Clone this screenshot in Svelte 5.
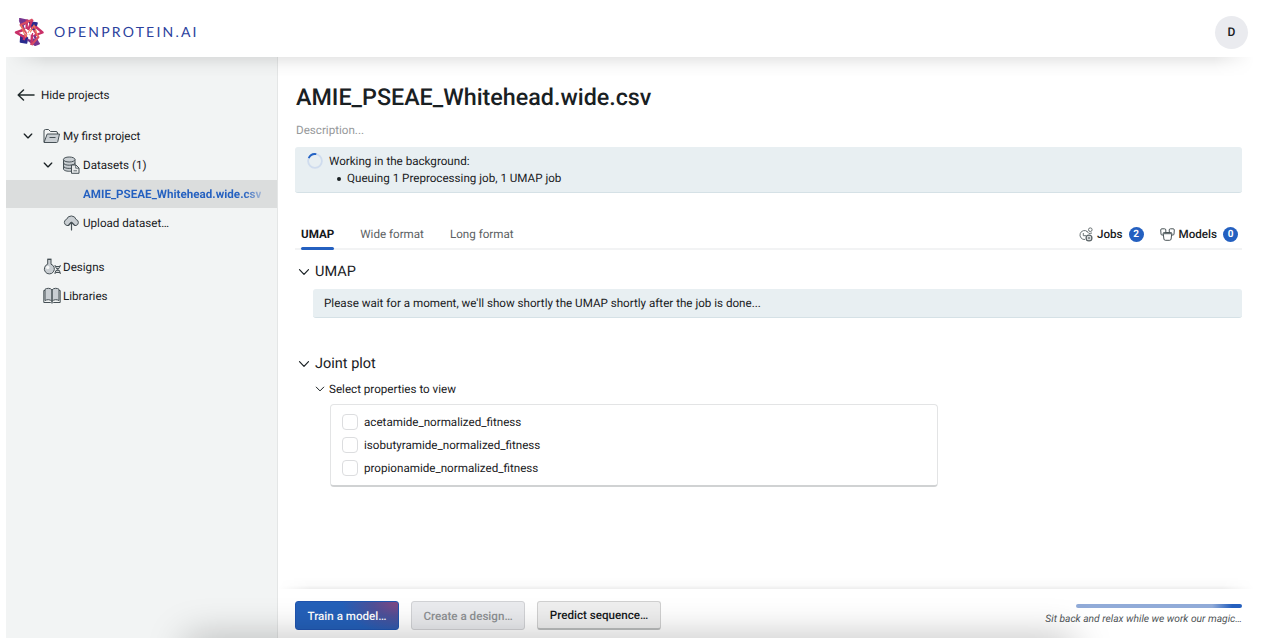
<script>
  const tabs = ['UMAP', 'Wide format', 'Long format'];
  const properties = [
    'acetamide_normalized_fitness',
    'isobutyramide_normalized_fitness',
    'propionamide_normalized_fitness'
  ];
</script>

{#snippet chevron(size, width)}
  <svg class="chevron" width={size} height={size} viewBox="0 0 12 12" fill="none" stroke="currentColor" stroke-width={width} stroke-linecap="round" stroke-linejoin="round"><path d="M1.5 3.700 6 8.300l4.500-4.600" /></svg>
{/snippet}

<div class="app">
  <header>
    <svg class="logo" width="30" height="30" viewBox="0 0 30 30" fill="none" stroke-linejoin="round">
      <path d="M15.500 5l7.500 1-2 7-3-1zM7 18l-.5 7 6 1 1-5z" fill="#292b8e" stroke="#292b8e" stroke-width="1.600" />
      <path d="M6 2l9 2-6 4zM14 23l11 3.500-4 1.500zM19 22l5 4" fill="#75358f" stroke="#75358f" stroke-width="2" />
      <path d="M6 3l4 10M20 18l4 8" stroke="#75358f" stroke-width="2.600" />
      <path d="M18.500 2.500L14 13M12 17.500L9.500 23M10.500 12.500l-8.500 3 8 4.500 3-1M17 11l5-1 6.500 5.500-8 3M18 16l-.5 12M13 2.500L12.500 12" stroke="#c93068" stroke-width="2.400" />
      <path d="M18.500 2.500L6.500 8l6.500 9M17.500 28l7-8-5-7" stroke="#d94b62" stroke-width="2" />
      <path d="M7 8l4.500 12 5-8M24 20l-4-12-5 10" stroke="#eb7c59" stroke-width="1.100" />
      <path d="M12.700 15l1.500 1.500 1.300-2.500 1.300 2 1.500-2-.5 3.500h-4.600z" fill="#fff" />
    </svg>
    <span class="brand">OPENPROTEIN.AI</span>
    <span class="avatar">D</span>
  </header>

  <div class="body">
    <aside>
      <div class="row hide">
        <svg width="18" height="14" viewBox="0 0 18 14" fill="none" stroke="#222b2c" stroke-width="1.500" stroke-linecap="round" stroke-linejoin="round"><path d="M17 7H1.500M6.500 2 1.200 7l5.300 5" /></svg>
        <span>Hide projects</span>
      </div>
      <div class="row project">
        {@render chevron(10, 1.6)}
        <svg class="icon" width="18" height="16" viewBox="0 0 18 16" fill="#c9ced2" stroke="#465055" stroke-width="1" stroke-linejoin="round"><path fill="#f3f4f4" d="M1 14V3Q1 1.500 2.500 1.500h3l2 2H13q1.500 0 1.500 1.500V6" /><path d="M4.200 6h12.300L14.800 13.500q-.2 1-1.300 1H1z" /><path d="M6.500 9.500h6" /></svg>
        <span>My first project</span>
      </div>
      <div class="row datasets">
        {@render chevron(10, 1.6)}
        <svg class="icon" width="18" height="18" viewBox="0 0 18 18" fill="#c9ced2" stroke="#465055" stroke-width="1" stroke-linejoin="round"><path d="M1.500 3.500v9.500c0 1.300 2.500 2.300 6 2.300s5.500-1 5.500-2.300V3.500" /><ellipse cx="7.200" cy="3.500" rx="5.800" ry="2.500" /><path fill="none" d="M1.500 6.800c0 3.200 11.500 3.200 11.500 0M1.500 10c0 3.200 11.500 3.200 11.500 0" /><path fill="#e8eaeb" d="M9.500 9h4.500l3 3v5.300H9.500z" /><path fill="none" d="M13.700 9v3.200H17M11.500 14.800h3.500" stroke-width=".8" /></svg>
        <span>Datasets (1)</span>
      </div>
      <div class="row selected"><span>AMIE_PSEAE_Whitehead.wide.csv</span></div>
      <div class="row upload">
        <svg class="icon" width="17" height="16" viewBox="0 0 17 16" fill="#c9ced2" stroke="#465055" stroke-width="1" stroke-linecap="round" stroke-linejoin="round"><path d="M5.500 10.500H4A3.200 3.200 0 0 1 3.600 4.300 5 5 0 0 1 13.100 4.500 3.100 3.100 0 0 1 13 10.500h-1.500L8.500 7.300z" /><path fill="none" stroke-width="1.200" d="M8.500 15V7.500M5.700 10l2.800-2.700L11.300 10" /></svg>
        <span>Upload dataset…</span>
      </div>
      <div class="row designs">
        <svg class="icon" width="18" height="17" viewBox="0 0 18 17" fill="#c9ced2" stroke="#465055" stroke-width="1" stroke-linejoin="round"><path d="M4.700 1.500V6.200A5 5 0 1 0 8 6.200V1.500z" /><path stroke-width="1.200" d="M4.300 1.200h4.200" /><circle cx="4.700" cy="9.500" r="1.700" fill="#f7f8f8" stroke="none" /><path fill="none" d="M12 7c0 4.500 5.300 3.500 5.300 9M17.300 7c0 4.500-5.300 3.500-5.300 9M12.300 8.500h4.700M12.300 14.500h4.700M13 10.300h3.300M13 12.700h3.300" /></svg>
        <span>Designs</span>
      </div>
      <div class="row libraries">
        <svg class="icon" width="18" height="17" viewBox="0 0 18 17" fill="#c9ced2" stroke="#465055" stroke-width="1" stroke-linejoin="round"><path d="M9 3Q7.800 1.300 5.500 1.300T2 2.300V13.500Q3.500 12.700 5.500 12.700T9 14.500zM9 3q1.200-1.700 3.500-1.700t3.500 1V13.500Q14.500 12.700 12.500 12.700T9 14.500z" /><path fill="none" d="M2 3.500H.8v12h6.700q1.500 1 3 0h6.700v-12H16" /></svg>
        <span>Libraries</span>
      </div>
    </aside>

    <main>
      <section class="content">
        <h1>AMIE_PSEAE_Whitehead.wide.csv</h1>
        <p class="description">Description...</p>

        <div class="notice working">
          <svg width="16" height="16" viewBox="0 0 16 16" fill="none" stroke-width="1.800"><circle cx="8" cy="8" r="6.900" stroke="#cfdcee" /><path d="M1.700 5.200A6.900 6.900 0 0 1 9.300 1.200" stroke="#2463c4" /></svg>
          <div class="lines">
            <span>Working in the background:</span>
            <span class="item"><i></i><span>Queuing 1 Preprocessing job, 1 UMAP job</span></span>
          </div>
        </div>

        <nav>
          {#each tabs as tab, i}
            <span class="tab" class:active={i === 0}>{tab}</span>
          {/each}
          <div class="counts">
            <svg width="15" height="15" viewBox="0 0 15 15" fill="none" stroke="#5b6467" stroke-width=".9"><path d="M9.500 4.700A4.500 4.500 0 1 0 7 12.500" /><path d="M5.300 6v2.700h3" /><circle cx="12.300" cy="2.700" r="1.800" /><circle cx="11" cy="11" r="2.900" stroke-width="1.300" /><circle cx="11" cy="11" r="1" /><path d="M8.500 4l2.500 2.500 3-.5" /></svg>
            <span class="jobs">Jobs</span><b>2</b>
            <svg class="models" width="15" height="13" viewBox="0 0 15 13" fill="#fff" stroke="#4b5558" stroke-width="1" stroke-linejoin="round"><path d="M.7 2q0-1.200 1.200-1.200h2.700Q5.800.8 5.800 2v4q0 1-1 1H2Q1 7 1 6zM9.200 2Q9.200.8 10.400.8h2.700q1.200 0 1.200 1.200L14 6q0 1-1 1h-2.500q-1 0-1-1z" /><path d="M3.200 5.300q0-.8 1-.8h6.600q1 0 1 .8l-.7 5.700q-.2 1.300-1.400 1.300H5.300Q4.100 12.300 3.900 11z" /><path d="M3.500 5.700h8" /></svg>
            <span class="models-label">Models</span><b>0</b>
          </div>
        </nav>

        <h2 class="umap">{@render chevron(12, 1.2)}<span>UMAP</span></h2>
        <div class="notice wait">Please wait for a moment, we'll show shortly the UMAP shortly after the job is done...</div>

        <h2 class="joint">{@render chevron(12, 1.2)}<span>Joint plot</span></h2>
        <h3>{@render chevron(10, 1.2)}<span>Select properties to view</span></h3>
        <div class="options">
          {#each properties as property}
            <label><i class="box"></i><span>{property}</span></label>
          {/each}
        </div>
      </section>

      <footer>
        <button class="train">Train a model…</button>
        <button class="create">Create a design…</button>
        <button class="predict">Predict sequence…</button>
        <div class="status">
          <div class="progress"></div>
          <em>Sit back and relax while we work our magic…</em>
        </div>
      </footer>
    </main>
  </div>
</div>

<style>
  :global(body) { background: #fff; }
  * { box-sizing: border-box; }
  .app {
    position: relative;
    width: 1248px;
    height: 638px;
    margin-left: 6px;
    display: flex;
    flex-direction: column;
    overflow: hidden;
    font: 11.640px/16px Roboto, sans-serif;
    text-rendering: geometricPrecision;
    color: #192023;
    white-space: nowrap;
  }
  .app::after {
    content: '';
    position: absolute;
    left: 184px;
    right: 184px;
    bottom: -26px;
    height: 22px;
    box-shadow: 0 0 38px 4px rgba(0, 0, 0, .28);
  }
  svg { flex: none; display: block; }
  header {
    flex: none;
    height: 57px;
    display: flex;
    align-items: center;
    padding: 7px 6px 0 8px;
    background: #fff;
  }
  .brand {
    margin-left: 10px;
    font: 14px/20px Lato, sans-serif;
    letter-spacing: 2.200px;
    color: #2b419d;
  }
  .avatar {
    margin-left: auto;
    width: 33px;
    height: 33px;
    border-radius: 50%;
    background: #eaebef;
    display: grid;
    place-items: center;
    font-size: 12px;
    font-weight: 500;
  }
  .body { position: relative; flex: 1; display: flex; min-height: 0; }
  .body::before {
    content: '';
    position: absolute;
    inset: 0 0 auto;
    height: 20px;
    background: linear-gradient(rgba(0, 0, 0, .09), rgba(0, 0, 0, .025) 50%, transparent);
    mask-image: linear-gradient(90deg, transparent, #000 40px, #000 calc(100% - 40px), transparent);
  }
  aside {
    width: 272px;
    background: #f2f4f4;
    border-right: 1px solid #e4e6e6;
    display: flex;
    flex-direction: column;
  }
  .row { height: 29px; flex: none; display: flex; align-items: center; }
  .hide { margin: 23px 0 12px; padding-left: 11px; gap: 6px; }
  .project { padding-left: 17px; }
  .project .icon { margin: 0 2px 0 10px; }
  .datasets { padding-left: 37px; }
  .datasets .icon { margin: 0 2px 0 9px; }
  .datasets .icon + span { margin-left: 1px; }
  .selected { padding-left: 77px; background: #dbdddd; font-weight: 700; margin-top: 1px; height: 28px; }
  .selected span {
    color: transparent;
    background: linear-gradient(90deg, #2460c0 90%, #a3b6d3);
    background-clip: text;
  }
  .upload { padding-left: 57px; gap: 3px; }
  .designs { margin-top: 15px; padding-left: 37px; gap: 2px; }
  .libraries { padding-left: 37px; gap: 2px; }
  main { flex: 1; display: flex; flex-direction: column; min-width: 0; }
  .content { flex: 1; padding: 24px 12px 0 17px; display: flex; flex-direction: column; }
  h1 { margin: 0; padding-left: 1px; font: 500 23.300px/32px Roboto, sans-serif; }
  .description { margin: 9px 0 9px 1px; color: #96999a; }
  .notice {
    flex: none;
    background: #e8eff2;
    border-bottom: 1px solid #d5e1e6;
    border-radius: 3px;
  }
  .working { height: 46px; padding: 6px 12px; display: flex; gap: 6px; }
  .lines { display: flex; flex-direction: column; line-height: 17.300px; }
  .item { display: flex; align-items: center; gap: 6px; padding-left: 8px; }
  .item i { width: 4px; height: 4px; border-radius: 50%; background: #192023; }
  nav {
    height: 31px;
    margin-top: 26px;
    flex: none;
    border-bottom: 2px solid #f2f3f4;
    display: flex;
    padding: 0 4px 0 6px;
    gap: 26px;
  }
  .tab { height: 31px; line-height: 30px; color: #5c6163; }
  .active { position: relative; color: #15191b; font-weight: 700; }
  .active::after { content: ''; position: absolute; inset: auto 0 0; height: 3px; border-radius: 1.500px; background: #2460c0; }
  .counts { margin-left: auto; display: flex; align-items: center; height: 30px; }
  .counts span { font-weight: 500; margin: 0 6px 0 4px; }
  .counts b {
    width: 15px;
    height: 15px;
    border-radius: 50%;
    background: #2460c0;
    color: #fff;
    font-size: 10px;
    line-height: 15px;
    text-align: center;
    font-weight: 700;
  }
  .counts .models { margin-left: 16px; }
  h2 { display: flex; align-items: center; gap: 5px; margin: 0; padding-left: 3px; font: 14.500px/20px Roboto, sans-serif; }
  .umap { margin-top: 12px; }
  .wait { margin: 7px 0 0 18px; height: 29px; line-height: 29px; padding-left: 11px; }
  .joint { margin-top: 36px; }
  h3 { display: flex; align-items: center; gap: 4px; margin: 7px 0; padding-left: 20px; font: 11.640px/16px Roboto, sans-serif; }
  .options {
    width: 608px;
    height: 83px;
    margin-left: 35px;
    padding: 5px 11px;
    border: 1px solid #e3e4e5;
    border-bottom: 2px solid #d0d2d3;
    border-radius: 4px;
  }
  label { display: flex; align-items: center; gap: 6px; height: 23.400px; }
  .box { width: 16px; height: 16px; border: 1px solid #dcdddf; border-radius: 4px; }
  footer {
    position: relative;
    flex: none;
    height: 49px;
    display: flex;
    align-items: flex-start;
    gap: 12px;
    padding: 12px 12px 0 17px;
  }
  footer::before {
    content: '';
    position: absolute;
    inset: -12px 0 auto;
    height: 12px;
    background: linear-gradient(transparent, rgba(0, 0, 0, .02) 70%, rgba(0, 0, 0, .07));
    mask-image: linear-gradient(90deg, transparent, #000 32px, #000 calc(100% - 32px), transparent);
  }
  button {
    height: 29px;
    padding: 0;
    font: 500 11.640px/26px Roboto, sans-serif;
    text-rendering: geometricPrecision;
    color: #15191b;
    background: #efefef;
    border: 1px solid #d0d0d0;
    border-radius: 3px;
  }
  .train {
    width: 104px;
    color: #fff;
    border-color: #2054ae;
    background: radial-gradient(ellipse 56px 32px at 100% 0, #824782, #4f5098 45%, #2460b9 100%);
  }
  .create { width: 114px; color: #8e9194; background: #eaebee; border-color: #d1d2d5; }
  .predict { width: 124px; border-bottom: 2px solid #bcbebe; }
  .status { margin: 3px 0 0 auto; display: flex; flex-direction: column; align-items: flex-end; }
  .progress {
    width: 166px;
    height: 4px;
    border-radius: 2px;
    background: linear-gradient(90deg, #91abd8 82%, #245fbe 94%);
  }
  em { margin-top: 3px; line-height: 16px; font-size: 10.250px; color: #505557; }
</style>
